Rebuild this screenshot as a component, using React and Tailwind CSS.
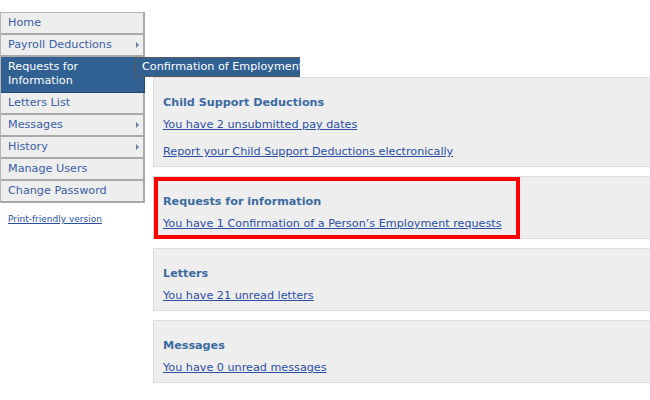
const menu = [
  { label: "Home" },
  { label: "Payroll Deductions", arrow: true },
  { label: "Requests for Information", active: true },
  { label: "Letters List" },
  { label: "Messages", arrow: true },
  { label: "History", arrow: true },
  { label: "Manage Users" },
  { label: "Change Password" },
];

const panels = [
  {
    title: "Child Support Deductions",
    links: ["You have 2 unsubmitted pay dates", "Report your Child Support Deductions electronically"],
  },
  {
    title: "Requests for information",
    links: ["You have 1 Confirmation of a Person\u2019s Employment requests"],
    highlight: true,
  },
  { title: "Letters", links: ["You have 21 unread letters"] },
  { title: "Messages", links: ["You have 0 unread messages"] },
];

const Arrow = () => (
  <span className="ml-auto mr-[4px] w-0 h-0 border-y-[3px] border-y-transparent border-l-[3px] border-l-[#6a7fa8]" />
);

const App = () => {
  return (
    <div
      className="w-[650px] h-[400px] overflow-hidden bg-white flex"
      style={{ fontFamily: '"DejaVu Sans", Verdana, sans-serif' }}
    >
      <div className="w-[145px] shrink-0 pt-[12px]">
        <ul className="border-l border-t border-[#b4b4b4]">
          {menu.map((m) =>
            m.active ? (
              <li
                key={m.label}
                className="relative h-[36px] bg-[#306192] text-white text-[11.2px] leading-[14px] pl-[7px] pt-[3px] border-r border-b border-[#23476c]"
              >
                Requests for
                <br />
                Information
                <div className="absolute left-[134px] top-0 w-[165px] h-[20px] bg-[#306192] border-l border-t border-b border-[#5a5a5a] text-white text-[11.2px] leading-[18px] pl-[6px] whitespace-nowrap z-10">
                  Confirmation of Employment
                </div>
              </li>
            ) : (
              <li
                key={m.label}
                className="h-[22px] flex items-center bg-[#eeeeee] text-[#3a5ea6] text-[11.2px] pl-[7px] border-r-2 border-b-2 border-[#a9a9a9]"
              >
                {m.label}
                {m.arrow && <Arrow />}
              </li>
            )
          )}
        </ul>
        <a href="#" className="block mt-[10px] ml-[8px] text-[9px] text-[#2b4fa3] underline">
          Print-friendly version
        </a>
      </div>

      <div className="flex-1 pl-[8px] pt-[77px] flex flex-col gap-[9px]">
        {panels.map((p) => (
          <div
            key={p.title}
            className="relative bg-[#eeeeee] border border-[#dcdcdc] border-r-0 pt-[18px] pb-[7px] pl-[9px]"
          >
            <h3 className="text-[11.2px] leading-[14px] font-bold text-[#3b6aa0] mb-[8px]">{p.title}</h3>
            <div className="flex flex-col gap-[13px]">
              {p.links.map((l) => (
                <a key={l} href="#" className="text-[11.2px] leading-[14px] text-[#2b4fa3] underline">
                  {l}
                </a>
              ))}
            </div>
            {p.highlight && (
              <div className="absolute left-0 top-0 w-[366px] h-[62px] border-4 border-[#ff0000]" />
            )}
          </div>
        ))}
      </div>
    </div>
  );
};

export default App;
